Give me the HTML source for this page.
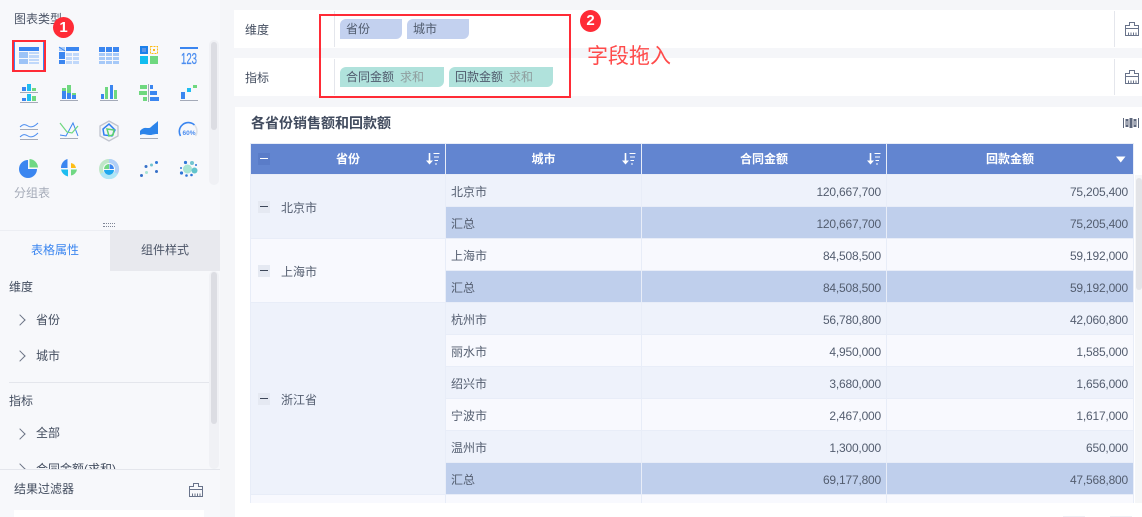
<!DOCTYPE html>
<html lang="zh"><head><meta charset="utf-8"><title>表格</title>
<style>
*{box-sizing:border-box}
html,body{margin:0;padding:0}
body{width:1142px;height:517px;overflow:hidden;position:relative;background:#f5f6f9;font:12px "Liberation Sans","Noto Sans CJK SC",sans-serif;color:#434d5f}
.a{position:absolute;white-space:nowrap}
.t{position:absolute;white-space:nowrap;line-height:16px}
.pill{position:absolute;height:20px;border-radius:6px 0 6px 0;line-height:21px;padding-left:6px;color:#4f5a6c}
.pill i{font-style:normal;color:#8f9d9e;margin-left:6px}
.tb{position:absolute;left:250px;top:143px;width:884px;height:360px;overflow:hidden}
table{border-collapse:collapse;table-layout:fixed;width:883px}
th{height:31px;background:#6285d0;color:#fff;font-weight:bold;border:1px solid #e8edf8;padding:0 0 2px}
td{height:32px;padding:2px 0 0;border:1px solid #e8edf8;color:#535d6f}
td.c{padding-left:5px}
td.n{text-align:right;padding-right:5px;font-size:12px;letter-spacing:-.2px}
td.p{vertical-align:middle;padding-left:30px;position:relative}
.o td{background:#eef2fb}.e td{background:#f8f9fe}.s td{background:#bfcfec;border-color:#e8edf8}
td.b1{background:#eef2fb!important}td.b2{background:#f8f9fe!important}
.m{position:absolute;left:7px;top:50%;margin-top:-6px;width:12px;height:12px;background:#e5e9f2}
.m:after{content:"";position:absolute;left:2px;top:5px;width:8px;height:1px;background:#3d4759}
.arr{position:absolute;width:8px;height:8px;border-top:1px solid #6b7385;border-right:1px solid #6b7385;transform:rotate(45deg)}
.dots{position:absolute;width:12px;height:4px;border-top:1px dotted #7f8696;border-bottom:1px dotted #7f8696}
</style></head>
<body>
<svg width="0" height="0" style="position:absolute"><defs>
<symbol id="br" viewBox="0 0 14 14"><path d="M4.500.5h5v3h4v3H.5v-3h4zM.5 6.500h13v7H.5z" fill="none" stroke="#69738a"/><path d="M3.500 10.500v3M6 10.500v3M8.500 10.500v3M11 10.500v3" stroke="#69738a"/></symbol>
<symbol id="so" viewBox="0 0 14 14"><path d="M3.500 1v10" stroke="#fff" stroke-width="1.600"/><path d="M0 8.500h7L3.500 12.500z" fill="#fff"/><path d="M7.500 1.500h6M8 5h5M8.500 8.500h3.500M9 12h2" stroke="#fff"/></symbol>
</defs></svg>

<!-- left panel -->
<div class="a" style="left:0;top:0;width:220px;height:517px;background:#f7f8fb"></div>
<div class="t" style="left:14px;top:11px;color:#4c5567">图表类型</div>
<svg class="a" style="left:0;top:0" width="220" height="210">
<rect x="209" y="40" width="10" height="145" rx="5" fill="#f0f1f5"/><rect x="211" y="42" width="6" height="88" rx="3" fill="#dcdde3"/>
<!-- row1 -->
<rect x="13" y="41" width="32" height="30" fill="#f7f8fb" stroke="#ff2b36" stroke-width="2"/>
<path d="M14.500 42v28M43.500 42v28" stroke="#3b86f0"/>
<g fill="#3b86f0"><rect x="19" y="47" width="20" height="4"/></g>
<g fill="#9cc3f7"><rect x="19" y="52" width="9" height="6"/><rect x="19" y="59" width="9" height="5"/></g>
<g fill="#c0d8fa"><rect x="29" y="52" width="10" height="2"/><rect x="29" y="55" width="10" height="3"/><rect x="29" y="59" width="10" height="2"/><rect x="29" y="62" width="10" height="2"/></g>
<g fill="#3b86f0"><rect x="66" y="47" width="13" height="4"/><rect x="59" y="52" width="6" height="7"/><rect x="59" y="60" width="6" height="4"/></g>
<path d="M59 47h6v4h-6z" fill="#a9ccf8"/><path d="M59 47l6 4" stroke="#3b86f0"/>
<g fill="#c0d8fa"><rect x="66" y="53" width="6" height="3"/><rect x="73" y="53" width="6" height="3"/><rect x="66" y="57" width="6" height="3"/><rect x="73" y="57" width="6" height="3"/><rect x="66" y="61" width="6" height="3"/><rect x="73" y="61" width="6" height="3"/></g>
<g fill="#3b86f0"><rect x="99" y="47" width="6" height="5"/><rect x="106" y="47" width="6" height="5"/><rect x="113" y="47" width="6" height="5"/></g>
<g fill="#a6c9f8"><rect x="99" y="53" width="6" height="3"/><rect x="106" y="53" width="6" height="3"/><rect x="113" y="53" width="6" height="3"/><rect x="99" y="57" width="6" height="3"/><rect x="106" y="57" width="6" height="3"/><rect x="113" y="57" width="6" height="3"/><rect x="99" y="61" width="6" height="3"/><rect x="106" y="61" width="6" height="3"/><rect x="113" y="61" width="6" height="3"/></g>
<rect x="140" y="46" width="8" height="8" fill="#1b80ea"/><rect x="142" y="48" width="4" height="4" fill="#5a95e8"/>
<rect x="150.500" y="46.500" width="7" height="7" fill="none" stroke="#fdbd15" stroke-dasharray="2 1"/><rect x="153" y="49" width="2" height="2" fill="#fdbd15"/>
<rect x="140" y="56" width="8" height="8" fill="#12bdf0"/><rect x="150" y="56" width="8" height="8" fill="#6fd87f"/>
<rect x="180" y="47" width="18" height="2" fill="#3b86f0"/>
<text x="181" y="64" font-family="Liberation Sans" font-size="16" fill="#4b8df0" stroke="#4b8df0" stroke-width=".3" textLength="16" lengthAdjust="spacingAndGlyphs">123</text>
<!-- row2 -->
<g fill="#3b86f0"><rect x="22" y="87" width="4" height="4"/><rect x="22" y="98" width="4" height="3"/><rect x="62" y="91" width="4" height="8"/><rect x="67" y="93" width="4" height="6"/><rect x="72" y="95" width="4" height="4"/><rect x="101" y="94" width="3" height="5"/><rect x="110" y="85" width="3" height="14"/><rect x="150" y="85" width="3" height="4"/><rect x="150" y="91" width="7" height="4"/><rect x="150" y="97" width="9" height="4"/><rect x="181" y="92" width="4" height="7"/></g>
<g fill="#1fbdf0"><rect x="27" y="84" width="4" height="7"/><rect x="27" y="94" width="4" height="7"/><rect x="187" y="88" width="4" height="4"/></g>
<g fill="#6fd87f"><rect x="32" y="88" width="4" height="3"/><rect x="32" y="96" width="4" height="5"/><rect x="62" y="88" width="4" height="3"/><rect x="67" y="85" width="4" height="8"/><rect x="72" y="93" width="4" height="2"/><rect x="105" y="87" width="3" height="12"/><rect x="114" y="90" width="3" height="9"/><rect x="140" y="85" width="7" height="4"/><rect x="139" y="91" width="8" height="4"/><rect x="143" y="97" width="4" height="4"/><rect x="193" y="85" width="4" height="3"/></g>
<g fill="#a4aab8"><rect x="20" y="92" width="18" height="1"/><rect x="20" y="102" width="18" height="1"/><rect x="60" y="100" width="18" height="1"/><rect x="100" y="100" width="18" height="1"/><rect x="148" y="84" width="1" height="18"/><rect x="180" y="100" width="18" height="1"/></g>
<!-- row3 -->
<g fill="none" stroke="#4b8df0"><path d="M20 127c3-3 5-3 8-1s6 1 10-3M20 137c3-3 5-3 8-1s6 1 10-3"/></g>
<path d="M20 129.500h18M20 139.500h18M60 138.500h18M140 138.500h18" stroke="#a4aab8"/>
<path d="M60 135l6 1 7-13 5 13" fill="none" stroke="#3b86f0"/><path d="M60 123l7 9 5 1 6-7" fill="none" stroke="#6fd87f" stroke-width="1.200"/>
<path d="M109 121l9 5v10l-9 5-9-5v-10z" fill="#f3f4f7" stroke="#c0c4ce" stroke-width="1.300"/>
<path d="M109 124l6 6-3 6-8-1-1-6z" fill="none" stroke="#2f7ff0" stroke-width="1.500"/><path d="M107 129l7 1-1 5-4 1z" fill="none" stroke="#5fd26f" stroke-width="1.500"/>
<path d="M140 131c5-6 8-1 11-4s4-3 7-6v13c-5 0-5 1-8 1-4 0-6-2-10 0z" fill="#2c84ea"/>
<path d="M180.500 136a9 9 0 0 1 14-11" fill="none" stroke="#3b86f0" stroke-width="1.600"/><path d="M194.500 125a9 9 0 0 1 1 11" fill="none" stroke="#dde0e6" stroke-width="1.600"/>
<text x="189" y="135" font-family="Liberation Sans" font-size="6.500" font-weight="bold" text-anchor="middle" fill="#4b8df0">60%</text>
<!-- row4 -->
<path d="M28 160a9 9 0 1 0 9 9h-9z" fill="#3b86f0"/><path d="M29.500 159a9 9 0 0 1 8.500 8.500h-8.500z" fill="#70d883"/>
<path d="M67.500 159a9 9 0 0 0-6.500 9h6.500z" fill="#3b86f0"/><path d="M71 163a6 6 0 0 1 5 5h-5z" fill="#fdbd15"/><path d="M71 169.500h6a7 7 0 0 1-6 6z" fill="#70d883"/><path d="M61 169.500a9 9 0 0 0 7 7v-7z" fill="#1fbdf0"/>
<circle cx="109" cy="169" r="8" fill="none" stroke="#bfe7c8" stroke-width="4"/><path d="M109 161a8 8 0 0 1 7 12" fill="none" stroke="#b0cff8" stroke-width="4"/><path d="M116 173a8 8 0 0 1-14 0" fill="none" stroke="#aee6f7" stroke-width="4"/>
<path d="M109 164a5 5 0 0 0-5 5h5z" fill="#70d883"/><path d="M109.500 164a5 5 0 0 1 4.500 5h-4.500z" fill="#3b86f0"/><path d="M104 170h10a5 5 0 0 1-10 0z" fill="#1fa8ef"/>
<g fill="#3670c8"><circle cx="141.500" cy="175.500" r="1.500"/><circle cx="156.500" cy="171.500" r="1.500"/><circle cx="146" cy="166.500" r="1.500"/></g>
<circle cx="156.500" cy="162.500" r="1.500" fill="#2f77d8"/>
<circle cx="151.500" cy="165" r="1.500" fill="#72c4d0"/><circle cx="146.500" cy="172.500" r="1.500" fill="#a8e4d4"/>
<circle cx="187.500" cy="169" r="4.500" fill="#a8e4d4"/><circle cx="194.500" cy="170.500" r="3" fill="#62c4cc"/><circle cx="192" cy="163" r="2" fill="#72c4d0"/>
<g fill="#2f77d8"><circle cx="185.500" cy="162.500" r="1.600"/><circle cx="181.500" cy="173" r="1.600"/><circle cx="186.500" cy="175.500" r="1.300"/><circle cx="191.500" cy="175" r="1.300"/><circle cx="181" cy="168" r="1"/><circle cx="196" cy="165" r="1"/></g>
</svg>
<div class="t" style="left:14px;top:185px;color:#a5abb8">分组表</div>
<div class="a" style="left:53px;top:17px;width:21px;height:21px;border-radius:50%;background:#ff2b36;color:#fff;font:bold 15px/21px 'Liberation Sans',sans-serif;text-align:center">1</div>
<div class="dots" style="left:103px;top:223px"></div>
<div class="a" style="left:0;top:230px;width:110px;height:41px;background:#f7f8fb;border-top:1px solid #eceef3;color:#3b86f0;text-align:center;line-height:39px">表格属性</div>
<div class="a" style="left:110px;top:230px;width:110px;height:41px;background:#e8e9ee;text-align:center;line-height:40px;color:#4c5567">组件样式</div>
<div class="a" style="left:209px;top:271px;width:10px;height:198px;border-radius:5px;background:#f0f1f5"></div>
<div class="a" style="left:211px;top:272px;width:6px;height:152px;border-radius:3px;background:#dcdde3"></div>
<div class="t" style="left:9px;top:279px">维度</div>
<div class="arr" style="left:16px;top:316px"></div><div class="t" style="left:36px;top:312px">省份</div>
<div class="arr" style="left:16px;top:352px"></div><div class="t" style="left:36px;top:348px">城市</div>
<div class="a" style="left:9px;top:382px;width:200px;height:1px;background:#e4e6ec"></div>
<div class="t" style="left:9px;top:393px">指标</div>
<div class="arr" style="left:16px;top:430px"></div><div class="t" style="left:36px;top:425px">全部</div>
<div class="arr" style="left:16px;top:465px"></div><div class="t" style="left:36px;top:461px">合同金额(求和)</div>
<div class="a" style="left:0;top:469px;width:220px;height:48px;background:#f7f8fb;border-top:1px solid #e4e6ec"></div>
<div class="t" style="left:14px;top:481px">结果过滤器</div>
<svg class="a" style="left:189px;top:483px" width="14" height="14"><use href="#br"/></svg>
<div class="a" style="left:14px;top:510px;width:190px;height:7px;background:#fff"></div>

<!-- top rows -->
<div class="a" style="left:234px;top:10px;width:908px;height:38px;background:#fff"></div>
<div class="a" style="left:234px;top:58px;width:908px;height:38px;background:#fff"></div>
<div class="a" style="left:334px;top:11px;width:1px;height:36px;background:#e4e6ec"></div>
<div class="a" style="left:334px;top:59px;width:1px;height:36px;background:#e4e6ec"></div>
<div class="a" style="left:1114px;top:11px;width:1px;height:36px;background:#e4e6ec"></div>
<div class="a" style="left:1114px;top:59px;width:1px;height:36px;background:#e4e6ec"></div>
<div class="t" style="left:245px;top:22px">维度</div>
<div class="t" style="left:245px;top:70px">指标</div>
<div class="pill" style="left:340px;top:19px;width:62px;background:#c3d1ef">省份</div>
<div class="pill" style="left:407px;top:19px;width:62px;background:#c3d1ef">城市</div>
<div class="pill" style="left:340px;top:67px;width:104px;background:#b0e2dc">合同金额<i>求和</i></div>
<div class="pill" style="left:449px;top:67px;width:104px;background:#b0e2dc">回款金额<i>求和</i></div>
<svg class="a" style="left:1125px;top:22px" width="14" height="14"><use href="#br"/></svg>
<svg class="a" style="left:1125px;top:70px" width="14" height="14"><use href="#br"/></svg>
<div class="a" style="left:319px;top:14px;width:252px;height:84px;border:2px solid #ff2b36"></div>
<div class="a" style="left:580px;top:10px;width:21px;height:22px;border-radius:50%;background:#ff2b36;color:#fff;font:bold 15px/22px 'Liberation Sans',sans-serif;text-align:center">2</div>
<div class="a" style="left:587px;top:44px;font-size:21px;line-height:26px;color:#ff4a4a">字段拖入</div>

<!-- card -->
<div class="a" style="left:235px;top:107px;width:907px;height:410px;background:#fff"></div>
<div class="t" style="left:251px;top:115px;font-size:14px;font-weight:bold;color:#414b5e">各省份销售额和回款额</div>
<svg class="a" style="left:1123px;top:117px" width="16" height="12"><path d="M.5 1v10M15.500 1v10" stroke="#5c667b"/><path d="M2.500 2h3v8h-3zM6.500 1h3v10h-3zM10.500 2h3v8h-3z" fill="#5c667b"/><path d="M3.500 4h1v4h-1zM11.500 4h1v4h-1z" fill="#dfe2e8"/></svg>
<div class="tb">
<table>
<colgroup><col style="width:195px"><col style="width:196px"><col style="width:245px"><col style="width:247px"></colgroup>
<tr><th>省份</th><th>城市</th><th>合同金额</th><th>回款金额</th></tr>
<tr class="o"><td class="p b1" rowspan="2"><span class="m"></span>北京市</td><td class="c">北京市</td><td class="n">120,667,700</td><td class="n">75,205,400</td></tr>
<tr class="s"><td class="c">汇总</td><td class="n">120,667,700</td><td class="n">75,205,400</td></tr>
<tr class="e"><td class="p b2" rowspan="2"><span class="m"></span>上海市</td><td class="c">上海市</td><td class="n">84,508,500</td><td class="n">59,192,000</td></tr>
<tr class="s"><td class="c">汇总</td><td class="n">84,508,500</td><td class="n">59,192,000</td></tr>
<tr class="o"><td class="p b1" rowspan="6"><span class="m"></span>浙江省</td><td class="c">杭州市</td><td class="n">56,780,800</td><td class="n">42,060,800</td></tr>
<tr class="e"><td class="c">丽水市</td><td class="n">4,950,000</td><td class="n">1,585,000</td></tr>
<tr class="o"><td class="c">绍兴市</td><td class="n">3,680,000</td><td class="n">1,656,000</td></tr>
<tr class="e"><td class="c">宁波市</td><td class="n">2,467,000</td><td class="n">1,617,000</td></tr>
<tr class="o"><td class="c">温州市</td><td class="n">1,300,000</td><td class="n">650,000</td></tr>
<tr class="s"><td class="c">汇总</td><td class="n">69,177,800</td><td class="n">47,568,800</td></tr>
<tr class="e"><td></td><td></td><td></td><td></td></tr>
</table>
</div>
<div class="a" style="left:258px;top:153px;width:12px;height:12px;background:#5a7cc8"></div>
<div class="a" style="left:260px;top:158px;width:8px;height:1px;background:#fff"></div>
<svg class="a" style="left:426px;top:152px" width="14" height="14"><use href="#so"/></svg>
<svg class="a" style="left:622px;top:152px" width="14" height="14"><use href="#so"/></svg>
<svg class="a" style="left:867px;top:152px" width="14" height="14"><use href="#so"/></svg>
<svg class="a" style="left:1116px;top:156px" width="10" height="7"><path d="M0 .5h9.500L4.750 6.500z" fill="#fff"/></svg>
<div class="a" style="left:1135px;top:175px;width:7px;height:328px;background:#f5f6f8"></div>
<div class="a" style="left:1136px;top:178px;width:6px;height:112px;border-radius:3px;background:#e3e4e8"></div>
<div class="a" style="left:1063px;top:516px;width:22px;height:1px;background:#eef0f5"></div>
<div class="a" style="left:1110px;top:516px;width:22px;height:1px;background:#eef0f5"></div>
</body></html>
